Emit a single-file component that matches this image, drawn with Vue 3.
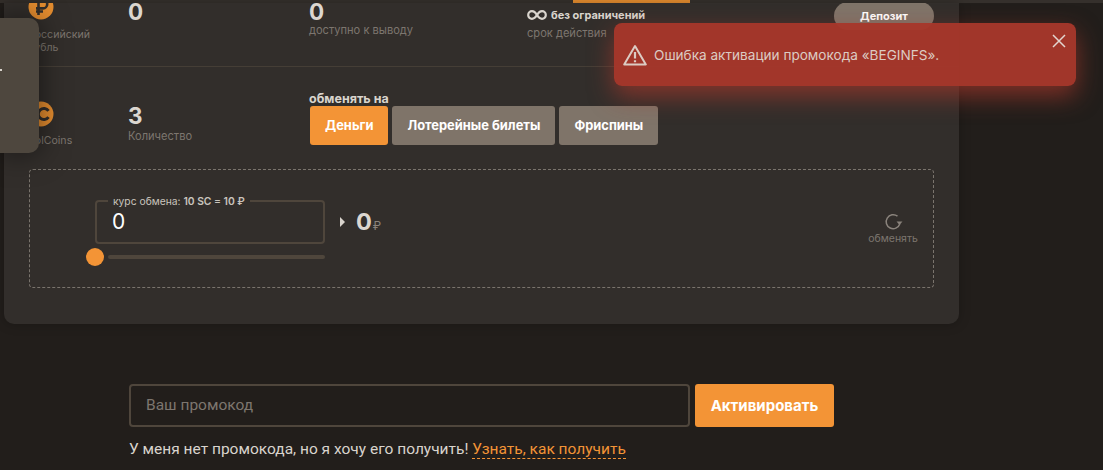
<script setup>
const options = [
  { label: 'Деньги', active: true },
  { label: 'Лотерейные билеты', active: false },
  { label: 'Фриспины', active: false }
]
</script>

<template>
  <div class="page">
    <div class="topbar"><div class="tab"></div></div>

    <section class="panel">
      <div class="row row-rub">
        <div class="cur">
          <svg class="coin" viewBox="0 0 26 26" width="26" height="26">
            <circle cx="13" cy="13" r="12.5" fill="#e58d2f" />
            <path d="M10.5 21V6h4.5a4.2 4.2 0 0 1 0 8.4H8M8 17.5h7" fill="none" stroke="#322e2b" stroke-width="2.6" />
          </svg>
          <div class="cur-name">Российский<br />рубль</div>
        </div>
        <div class="stat stat-a">
          <div class="val">0</div>
        </div>
        <div class="stat stat-b">
          <div class="val">0</div>
          <div class="lab lab-avail">доступно к выводу</div>
        </div>
        <div class="stat stat-c">
          <div class="term">
            <svg viewBox="0 0 20 10" width="20" height="10">
              <path d="M10 5C8 1.8 6.5 1.2 5 1.2a3.8 3.8 0 0 0 0 7.6c1.5 0 3-.6 5-3.8s3.5-3.8 5-3.8a3.8 3.8 0 0 1 0 7.6c-1.500 0-3-.6-5-3.8z" fill="none" stroke="#d9d4cd" stroke-width="2.2" />
            </svg>
            <span>без ограничений</span>
          </div>
          <div class="lab lab-term">срок действия</div>
        </div>
        <button class="deposit">Депозит</button>
      </div>

      <div class="divider"></div>

      <div class="row row-sc">
        <div class="cur cur-sc">
          <svg class="coin" viewBox="0 0 26 26" width="26" height="26">
            <circle cx="13" cy="13" r="12.5" fill="#e58d2f" />
            <path d="M20.5 9.8a5.6 5.6 0 1 0 0 6.4" fill="none" stroke="#322e2b" stroke-width="3" />
          </svg>
          <div class="cur-name sc-name">SolCoins</div>
        </div>
        <div class="stat stat-a">
          <div class="val val-3">3</div>
          <div class="lab">Количество</div>
        </div>
        <div class="swap">
          <div class="swap-title">обменять на</div>
          <div class="swap-opts">
            <button v-for="o in options" :key="o.label" class="opt" :class="{ on: o.active }">{{ o.label }}</button>
          </div>
        </div>
      </div>

      <div class="box">
        <div class="calc">
          <fieldset class="field">
            <legend>курс обмена: <b>10 SC = 10 ₽</b></legend>
            <span class="field-val">0</span>
          </fieldset>
          <div class="slider">
            <span class="knob"></span>
            <span class="track"></span>
          </div>
        </div>
        <div class="result">
          <span class="tri"></span>
          <span class="res-val">0</span>
          <span class="res-cur">₽</span>
        </div>
        <div class="do">
          <svg viewBox="0 0 20 20" width="20" height="20">
            <path d="M14.5 4.2A7 7 0 1 0 16.8 12" fill="none" stroke="#8a837c" stroke-width="1.5" />
            <path d="M13.5 9.5h6l-3 3.5z" fill="#8a837c" />
          </svg>
          <span>обменять</span>
        </div>
      </div>
    </section>

    <section class="promo">
      <div class="promo-row">
        <div class="promo-input">Ваш промокод</div>
        <button class="promo-btn">Активировать</button>
      </div>
      <p class="promo-note">У меня нет промокода, но я хочу его получить! <a>Узнать, как получить</a></p>
    </section>

    <aside class="drawer"><span class="dot"></span></aside>

    <div class="toast">
      <svg class="warn" viewBox="0 0 24 22" width="24" height="22">
        <path d="M12 2 L22.8 20.5H1.2z" fill="none" stroke="#dccbc3" stroke-width="2" stroke-linejoin="round" />
        <path d="M12 8v6.5M12 16.3v2" fill="none" stroke="#dccbc3" stroke-width="2.2" />
      </svg>
      <span class="toast-text">Ошибка активации промокода «BEGINFS».</span>
      <svg class="close" viewBox="0 0 14 14" width="14" height="14">
        <path d="M1 1l12 12M13 1L1 13" fill="none" stroke="#e2d5cf" stroke-width="1.5" />
      </svg>
    </div>
  </div>
</template>

<style scoped>
.page {
  position: relative;
  width: 1103px;
  height: 470px;
  overflow: hidden;
  background: #221e1b;
  font-family: "Inter", "Liberation Sans", sans-serif;
  color: #d9d4cd;
}
.topbar {
  height: 3px;
  background: #35302c;
  padding-left: 573px;
}
.tab {
  width: 117px;
  height: 3px;
  background: #e58d2f;
}
.panel {
  margin-left: 4px;
  width: 955px;
  height: 321px;
  background: #322e2b;
  border-radius: 0 0 10px 10px;
  box-shadow: 0 0 12px rgba(0, 0, 0, .25);
  overflow: hidden;
}
.row {
  display: flex;
  align-items: flex-start;
}
.row-rub {
  height: 72px;
  margin-top: -9px;
}
.cur {
  width: 124px;
  padding-left: 24px;
  box-sizing: border-box;
  flex: none;
}
.coin {
  display: block;
}
.cur-sc .coin {
  margin-top: 2px;
}
.cur-name {
  margin-top: 8px;
  font-size: 10.6px;
  line-height: 13px;
  color: #7d766f;
}
.sc-name {
  margin-top: 7px;
}
.stat-a {
  width: 181px;
  flex: none;
}
.stat-b {
  width: 218px;
  flex: none;
}
.stat-c {
  width: 307px;
  flex: none;
}
.val {
  font-size: 22.5px;
  font-weight: 700;
  line-height: 18px;
  margin-top: 9px;
  color: #dcd7d0;
}
.val-3 {
  line-height: 24px;
  margin-top: 5px;
}
.lab {
  font-size: 11.1px;
  line-height: 14px;
  margin-top: 1px;
  color: #7d766f;
}
.lab-avail {
  margin-top: 2px;
}
.term {
  display: flex;
  align-items: center;
  gap: 4px;
  margin-top: 14px;
  font-size: 11px;
  font-weight: 700;
  line-height: 14px;
}
.lab-term {
  margin-top: 4px;
}
.deposit {
  width: 100px;
  height: 28px;
  margin-top: 8px;
  border: 0;
  border-radius: 14px;
  background: #7f7469;
  color: #fff;
  font: 700 11px "Inter", sans-serif;
}
.divider {
  height: 1px;
  background: #453e36;
}
.row-sc {
  height: 102px;
  padding-top: 31px;
  box-sizing: border-box;
  margin-top: 1px;
}
.swap {
  margin: -8px 0 0 1px;
}
.swap-title {
  font-size: 12.5px;
  font-weight: 700;
  line-height: 13px;
  margin: 1px 0 0 -1px;
}
.swap-opts {
  display: flex;
  gap: 4px;
  margin-top: 1px;
}
.opt {
  height: 39px;
  padding: 0 15px;
  border: 0;
  border-radius: 3px;
  background: #7f7469;
  color: #fff;
  font: 700 12.9px "Inter", sans-serif;
}
.opt.on {
  background: #f39436;
}
.box {
  display: flex;
  align-items: flex-start;
  margin: -1px 25px 0;
  width: 905px;
  height: 119px;
  box-sizing: border-box;
  border: 1px dashed #7a746d;
  border-radius: 4px;
  padding-left: 65px;
}
.calc {
  width: 230px;
  flex: none;
}
.field {
  margin: 25px 0 0;
  padding: 0 0 0 15px;
  height: 49px;
  box-sizing: border-box;
  border: 2px solid #4f463c;
  border-radius: 4px;
}
.field legend {
  margin-left: -4px;
  padding: 0 5px;
  font-size: 10.3px;
  line-height: 12px;
  color: #c9c4bd;
}
.field legend b {
  font-weight: 600;
}
.field-val {
  display: block;
  font-size: 21px;
  line-height: 30px;
  color: #fff;
}
.slider {
  display: flex;
  align-items: center;
  gap: 4px;
  margin: 4px 0 0 -9px;
}
.knob {
  width: 18px;
  height: 18px;
  border-radius: 50%;
  background: #f39436;
}
.track {
  flex: 1;
  height: 4px;
  border-radius: 2px;
  background: #4f463c;
}
.result {
  display: flex;
  align-items: baseline;
  margin: 39px 0 0 15px;
  width: 518px;
  flex: none;
}
.tri {
  width: 0;
  height: 0;
  align-self: center;
  border-left: 5px solid #d9d4cd;
  border-top: 5px solid transparent;
  border-bottom: 5px solid transparent;
  margin-right: 11px;
}
.res-val {
  font-size: 23.5px;
  font-weight: 700;
  line-height: 26px;
  color: #dcd7d0;
}
.res-cur {
  font-size: 12px;
  margin-left: 1px;
  color: #8a837c;
}
.do {
  width: 50px;
  margin: 42px 0 0 10px;
  display: flex;
  flex-direction: column;
  align-items: center;
  font-size: 10.5px;
  line-height: 14px;
  color: #7d766f;
}
.do svg {
  display: block;
}
.promo {
  margin: 60px 0 0 129px;
  width: 705px;
}
.promo-row {
  display: flex;
  gap: 5px;
}
.promo-input {
  flex: 1;
  height: 43px;
  box-sizing: border-box;
  border: 2px solid #4f463c;
  border-radius: 4px;
  padding-left: 15px;
  font-family: "Roboto", sans-serif;
  font-size: 15.5px;
  line-height: 39px;
  color: #7d766f;
}
.promo-btn {
  width: 139px;
  height: 43px;
  border: 0;
  border-radius: 3px;
  background: #f39436;
  color: #fff;
  font: 700 15px "Inter", sans-serif;
}
.promo-note {
  margin: 13px 0 0;
  font-family: "Roboto", sans-serif;
  font-size: 15.5px;
  line-height: 18px;
  color: #d9d4cd;
}
.promo-note a {
  color: #f39436;
  border-bottom: 1px dashed #f39436;
}
.drawer {
  position: absolute;
  left: 0;
  top: 18px;
  width: 39px;
  height: 135px;
  background: #4e473e;
  border-radius: 0 10px 10px 0;
  box-shadow: 0 0 30px rgba(0, 0, 0, .55);
}
.dot {
  position: absolute;
  left: 0;
  top: 51px;
  width: 2px;
  height: 2px;
  background: #d9d4cd;
}
.toast {
  position: absolute;
  left: 614px;
  top: 23px;
  width: 462px;
  height: 63px;
  box-sizing: border-box;
  padding: 0 10px 0 9px;
  display: flex;
  align-items: center;
  background: rgba(167, 55, 43, .96);
  border-radius: 8px;
  box-shadow: 0 10px 24px rgba(167, 55, 43, .7);
  color: #dccbc3;
}
.warn {
  flex: none;
}
.toast-text {
  margin-left: 7px;
  font-size: 13.6px;
}
.close {
  position: absolute;
  right: 10px;
  top: 11px;
}
</style>
